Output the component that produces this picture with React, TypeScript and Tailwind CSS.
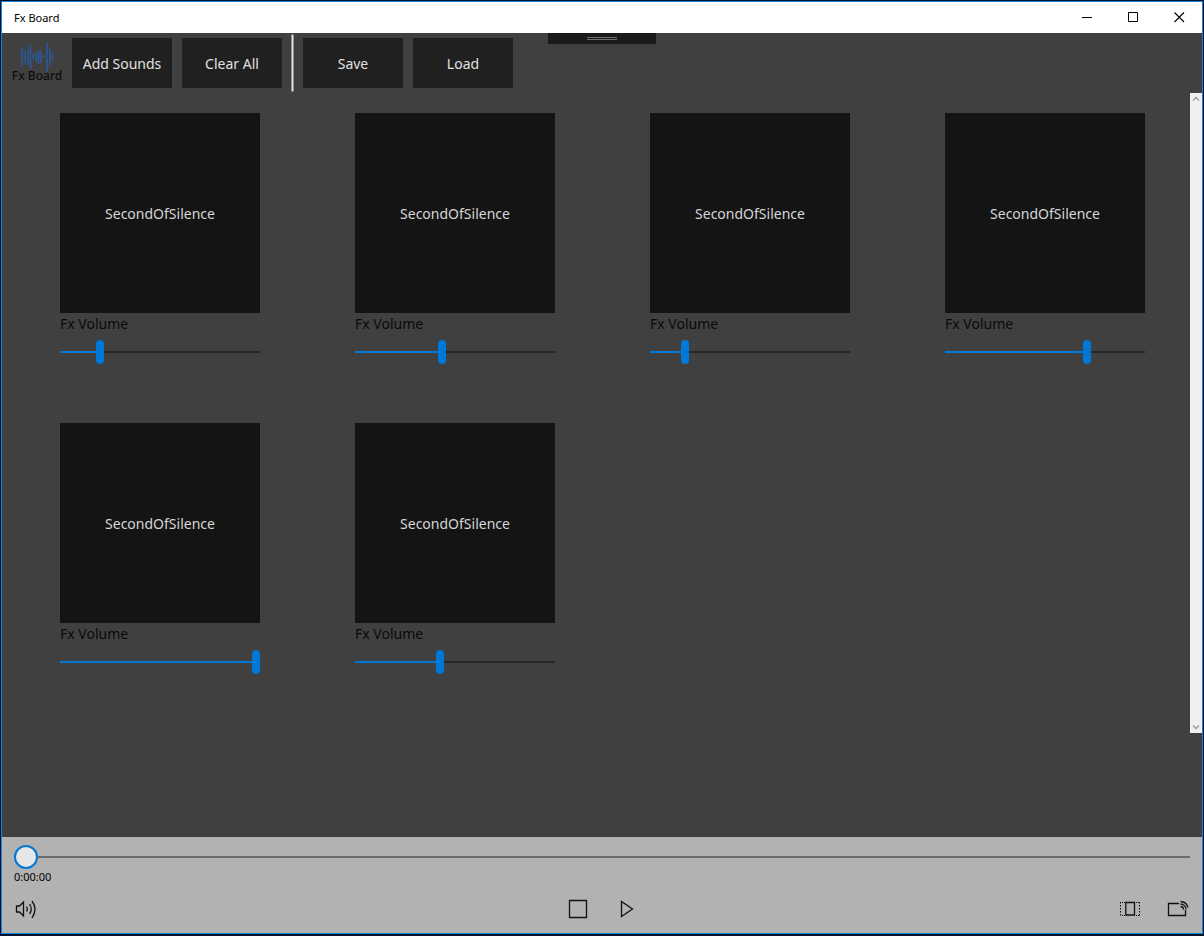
import { useState, type CSSProperties, type ReactNode } from "react";

type Sound = { id: number; name: string; volume: number };

const initialSounds: Sound[] = [
  { id: 1, name: "SecondOfSilence", volume: 19 },
  { id: 2, name: "SecondOfSilence", volume: 43 },
  { id: 3, name: "SecondOfSilence", volume: 16 },
  { id: 4, name: "SecondOfSilence", volume: 72 },
  { id: 5, name: "SecondOfSilence", volume: 100 },
  { id: 6, name: "SecondOfSilence", volume: 42 },
];

/* x, top, bottom of each bar in the wave form */
const waveBars = [
  [2, 5, 25],
  [5, 9, 21],
  [8, 7, 23],
  [10.5, 3, 27],
  [13, 12, 17],
  [16, 10, 20],
  [18.5, 8, 22],
  [21, 9, 21],
  [24, 13, 16],
  [27, 0, 30],
  [30, 6, 24],
  [32.5, 11, 20],
];

function Logo() {
  return (
    <div className="flex w-[50px] flex-col items-center">
      <svg width="34" height="30" viewBox="0 0 34 30" stroke="#2b579a" strokeWidth="1.6" aria-hidden="true">
        {waveBars.map(([x, top, bottom]) => (
          <line key={x} x1={x} x2={x} y1={top} y2={bottom} />
        ))}
      </svg>
      <span className="-mt-1 text-xs/4 font-medium whitespace-nowrap text-[#0c0c0c]">Fx Board</span>
    </div>
  );
}

function CaptionButton({ label, children }: { label: string; children: ReactNode }) {
  return (
    <button type="button" aria-label={label} className="flex w-[46px] items-center justify-center hover:bg-gray-200">
      <svg width="11" height="11" viewBox="0 0 11 11" fill="none" stroke="#000" aria-hidden="true">
        {children}
      </svg>
    </button>
  );
}

function ToolbarButton({ children }: { children: ReactNode }) {
  return (
    <button type="button" className="h-[50px] w-[100px] bg-[#202020] pt-px text-sm whitespace-nowrap text-[#e0e0e0] hover:bg-[#2b2b2b]">
      {children}
    </button>
  );
}

function SoundTile({ sound, onVolume }: { sound: Sound; onVolume: (value: number) => void }) {
  const id = `volume-${sound.id}`;
  return (
    <div className="w-[200px]">
      <button type="button" className="block h-[200px] w-full bg-[#141414] pt-px text-sm text-[#d6d6d6]">
        {sound.name}
      </button>
      <label htmlFor={id} className="block text-sm/[22px] text-[#0a0a0a]">
        Fx Volume
      </label>
      <input
        id={id}
        type="range"
        min={0}
        max={100}
        value={sound.volume}
        onChange={(e) => onVolume(Number(e.target.value))}
        style={{ "--fill": `${sound.volume}%` } as CSSProperties}
        className="mt-[5px] block h-6 w-full appearance-none bg-transparent [&::-webkit-slider-runnable-track]:h-[2px] [&::-webkit-slider-runnable-track]:bg-[linear-gradient(to_right,#0078d7_var(--fill),#262626_var(--fill))] [&::-webkit-slider-thumb]:-mt-[11px] [&::-webkit-slider-thumb]:h-6 [&::-webkit-slider-thumb]:w-2 [&::-webkit-slider-thumb]:appearance-none [&::-webkit-slider-thumb]:rounded-full [&::-webkit-slider-thumb]:bg-[#0078d7]"
      />
    </div>
  );
}

function ScrollButton({ label, d }: { label: string; d: string }) {
  return (
    <button type="button" aria-label={label} className="flex h-3 w-3 items-center justify-center">
      <svg width="8" height="6" viewBox="0 0 8 6" fill="none" stroke="#9a9a9a" strokeWidth="1.4" aria-hidden="true">
        <path d={d} />
      </svg>
    </button>
  );
}

function PlayerButton({ label, children }: { label: string; children: ReactNode }) {
  return (
    <button type="button" aria-label={label} className="flex h-12 w-12 items-center justify-center">
      <svg width="24" height="24" viewBox="0 0 24 24" fill="none" stroke="#111" strokeWidth="1.3" aria-hidden="true">
        {children}
      </svg>
    </button>
  );
}

function Player() {
  const [position, setPosition] = useState(0);
  return (
    <footer className="bg-[#b2b2b2] pt-2">
      <div className="px-3">
        <input
          type="range"
          aria-label="Position"
          min={0}
          max={100}
          value={position}
          onChange={(e) => setPosition(Number(e.target.value))}
          style={{ "--fill": `${position}%` } as CSSProperties}
          className="block h-6 w-full appearance-none bg-transparent [&::-webkit-slider-runnable-track]:h-[2px] [&::-webkit-slider-runnable-track]:bg-[linear-gradient(to_right,#0078d7_var(--fill),#6b6b6b_var(--fill))] [&::-webkit-slider-thumb]:-mt-[11px] [&::-webkit-slider-thumb]:h-6 [&::-webkit-slider-thumb]:w-6 [&::-webkit-slider-thumb]:appearance-none [&::-webkit-slider-thumb]:rounded-full [&::-webkit-slider-thumb]:border-2 [&::-webkit-slider-thumb]:border-solid [&::-webkit-slider-thumb]:border-[#0078d7] [&::-webkit-slider-thumb]:bg-[#e6e6e6]"
        />
        <div className="text-[11px]/4 text-black">0:00:00</div>
      </div>
      <div className="grid grid-cols-3">
        <div className="flex">
          <PlayerButton label="Volume">
            <path d="M2.5 9h3l4-4v14l-4-4h-3z" />
            <path d="M12.5 9.5q1.600 2.500 0 5M15.5 7q3.500 5 0 10M18 4q6 8 0 17" />
          </PlayerButton>
        </div>
        <div className="flex justify-center">
          <PlayerButton label="Stop">
            <path d="M3.500 3.500h17v17h-17z" />
          </PlayerButton>
          <PlayerButton label="Play">
            <path d="M7.500 4.500v15L18.500 12z" />
          </PlayerButton>
        </div>
        <div className="flex justify-end">
          <PlayerButton label="Aspect ratio">
            <path d="M7.800 5.500h8.700v12.500h-8.700z" />
            <path d="M2.500 5v14M21.500 5v14" strokeWidth="1" strokeDasharray="1.500 1.500" />
            <path d="M4 5.500h3M4 18.500h3M18 5.500h3M18 18.500h3" strokeWidth="1" strokeDasharray="1 1" />
          </PlayerButton>
          <PlayerButton label="Cast to device">
            <path d="M13 6.500H2.500v12h17V13" />
            <path d="M14.500 9.500a3 3 0 0 1 3 3M14.500 7a5.500 5.500 0 0 1 5.500 5.500M14.500 4.500a8 8 0 0 1 7.500 6" />
          </PlayerButton>
        </div>
      </div>
    </footer>
  );
}

export default function App() {
  const [sounds, setSounds] = useState(initialSounds);
  const setVolume = (id: number, volume: number) =>
    setSounds((all) => all.map((s) => (s.id === id ? { ...s, volume } : s)));

  return (
    <div className="flex min-h-screen flex-col border border-b-2 border-[#04142e] font-['Noto_Sans','Open_Sans',sans-serif]">
      <div className="flex flex-1 flex-col border border-[#1a7fd6] bg-[#404040]">
        <header className="flex h-[31px] justify-between bg-white">
          <h1 className="self-center pl-3 text-[11px]/4 text-black">Fx Board</h1>
          <div className="flex">
            <CaptionButton label="Minimize">
              <path d="M0 5.500h10" />
            </CaptionButton>
            <CaptionButton label="Maximize">
              <path d="M.5 .5h9v9h-9z" />
            </CaptionButton>
            <CaptionButton label="Close">
              <path d="M.5 .5l9.500 9.500M10 .5L.5 10" strokeWidth="1.100" />
            </CaptionButton>
          </div>
        </header>

        <div className="relative flex h-[60px] items-center gap-[10px] pl-[10px]">
          <Logo />
          <ToolbarButton>Add Sounds</ToolbarButton>
          <ToolbarButton>Clear All</ToolbarButton>
          <div className="-mx-px h-[58px] w-[3px] rounded-full border border-[#909090] bg-[#e6e6e6]" />
          <ToolbarButton>Save</ToolbarButton>
          <ToolbarButton>Load</ToolbarButton>
          <div className="absolute top-0 left-1/2 flex h-[11px] w-[108px] -translate-x-1/2 items-center justify-center bg-[#1a1a1a]">
            <div className="h-[3px] w-[30px] border-y border-[#6e6e6e]" />
          </div>
        </div>

        <main className="mb-[104px] flex flex-1">
          <div className="flex flex-1 flex-wrap content-start gap-x-[95px] gap-y-[59px] pt-5 pr-5 pl-[58px]">
            {sounds.map((sound) => (
              <SoundTile key={sound.id} sound={sound} onVolume={(v) => setVolume(sound.id, v)} />
            ))}
          </div>
          <div className="flex w-3 flex-col justify-between bg-[#f0f0f0]">
            <ScrollButton label="Scroll up" d="M1 4.500l3-3 3 3" />
            <ScrollButton label="Scroll down" d="M1 1.500l3 3 3-3" />
          </div>
        </main>

        <Player />
      </div>
    </div>
  );
}
